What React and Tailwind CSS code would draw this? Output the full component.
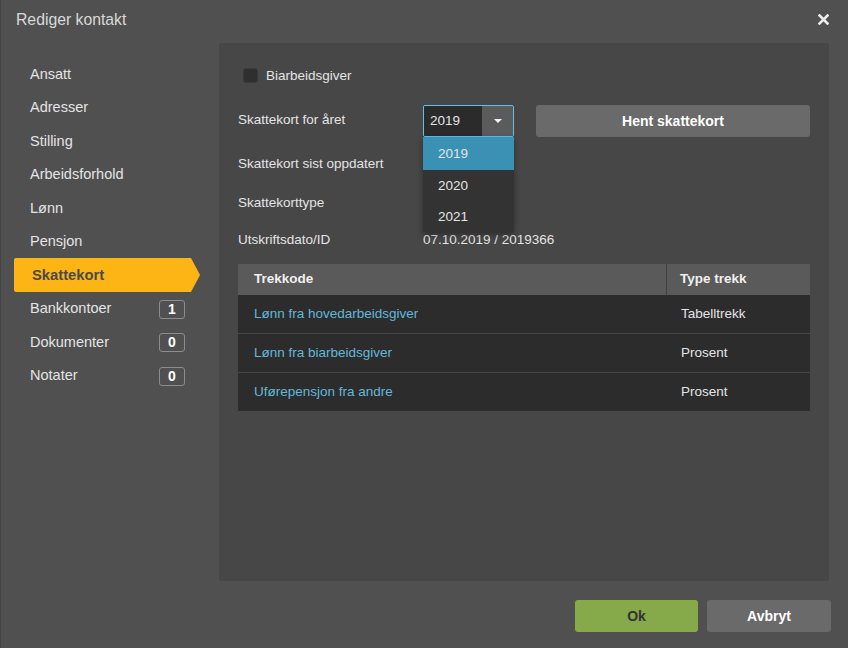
import React from 'react';

const menu = [
  { label: 'Ansatt' },
  { label: 'Adresser' },
  { label: 'Stilling' },
  { label: 'Arbeidsforhold' },
  { label: 'Lønn' },
  { label: 'Pensjon' },
  { label: 'Skattekort', active: true },
  { label: 'Bankkontoer', count: 1 },
  { label: 'Dokumenter', count: 0 },
  { label: 'Notater', count: 0 },
];

const rows = [
  { code: 'Lønn fra hovedarbeidsgiver', type: 'Tabelltrekk' },
  { code: 'Lønn fra biarbeidsgiver', type: 'Prosent' },
  { code: 'Uførepensjon fra andre', type: 'Prosent' },
];

const years = ['2019', '2020', '2021'];

export default function App() {
  return (
    <div className="w-[848px] h-[648px] bg-[#505050] flex flex-col text-[#e4e4e4] border-l border-[#434343] font-['Liberation_Sans',Arial,sans-serif]">
      {/* tittel */}
      <div className="h-[43px] flex items-start justify-between pl-[15px] pr-[19px] pt-[8px]">
        <span className="text-[15.75px] text-[#d9d9d9]">Rediger kontakt</span>
        <svg width="11" height="11" viewBox="0 0 11 11" className="mt-[6px]">
          <path d="M1.5 1.5 L9.5 9.5 M9.5 1.5 L1.5 9.5" stroke="#ececec" strokeWidth="2.6" strokeLinecap="square" />
        </svg>
      </div>

      <div className="flex flex-1 min-h-0">
        {/* meny */}
        <div className="w-[218px] shrink-0 pt-[15px] flex flex-col">
          {menu.map((m) =>
            m.active ? (
              <div
                key={m.label}
                className="ml-[13px] w-[186px] h-[34px] -mt-[1px] mb-[0.5px] flex items-center pl-[18px] bg-[#fdb515] rounded-l-[2px] text-[#4a4a4a] font-bold text-[14.75px] [clip-path:polygon(0_0,177px_0,100%_50%,177px_100%,0_100%)]"
              >
                {m.label}
              </div>
            ) : (
              <div key={m.label} className="ml-[13px] w-[186px] h-[33.5px] flex items-center justify-between pl-[16px] pr-[15px] text-[14.5px]">
                <span>{m.label}</span>
                {m.count !== undefined && (
                  <span className="w-[26px] h-[19px] flex items-center justify-center border border-[#8c8c8c] rounded-[3px] font-bold text-[14px] text-white">
                    {m.count}
                  </span>
                )}
              </div>
            )
          )}
        </div>

        {/* innhold */}
        <div className="flex-1 mr-[19px] bg-[#474747] rounded-[3px] px-[19px] pt-[25px] text-[13.5px]">
          <label className="flex items-center h-[15px] pl-[5px] gap-[8px]">
            <span className="w-[15px] h-[15px] rounded-[3px] bg-[#2f2f2f] border border-[#3a3a3a]" />
            <span className="text-[13.5px] pt-px">Biarbeidsgiver</span>
          </label>

          <div className="flex items-center h-[32px] mt-[22px]">
            <span className="w-[185px] pb-px">Skattekort for året</span>
            <div className="relative">
              <div className="w-[91px] h-[32px] flex border border-[#5fc3e4] rounded-[2px] overflow-hidden">
                <span className="flex-1 bg-[#2b2b2b] flex items-center pl-[6px]">2019</span>
                <span className="w-[31px] bg-[#5b5b5b] flex items-center justify-center">
                  <svg width="8" height="4" viewBox="0 0 8 4">
                    <path d="M0 0 H8 L4 4 Z" fill="#f2f2f2" />
                  </svg>
                </span>
              </div>
              <div className="absolute left-0 top-[32px] w-[91px] bg-[#333333] shadow-[0_3px_6px_rgba(0,0,0,0.35)] z-10">
                {years.map((y, i) => (
                  <div
                    key={y}
                    className={`flex items-center pl-[15px] pt-[2px] ${i === 0 ? 'bg-[#3b91b4] h-[33px]' : 'h-[31px]'}`}
                  >
                    {y}
                  </div>
                ))}
              </div>
            </div>
            <button className="ml-[22px] w-[274px] h-[32px] bg-[#6a6a6a] rounded-[3px] font-bold text-white text-[14px]">
              Hent skattekort
            </button>
          </div>

          <div className="flex items-center h-[52px]">
            <span className="w-[185px] pt-[2px]">Skattekort sist oppdatert</span>
          </div>
          <div className="flex items-center h-[26px]">
            <span className="w-[185px] pt-[2px]">Skattekorttype</span>
          </div>
          <div className="flex items-center h-[49px] pt-[2px]">
            <span className="w-[185px]">Utskriftsdato/ID</span>
            <span>07.10.2019 / 2019366</span>
          </div>

          <div className="w-[572px]">
            <div className="flex h-[31px] bg-[#5a5a5a] font-bold text-[#f0f0f0]">
              <div className="w-[429px] flex items-center pl-[16px] border-r border-[#404040]">Trekkode</div>
              <div className="flex-1 flex items-center pl-[13px]">Type trekk</div>
            </div>
            {rows.map((r, i) => (
              <div key={r.code} className={`flex bg-[#2c2c2c] ${i > 0 ? 'h-[39px] border-t border-[#474747]' : 'h-[38px]'}`}>
                <div className="w-[429px] flex items-center pl-[16px] pt-px text-[#62b8da]">{r.code}</div>
                <div className="flex-1 flex items-center pl-[14px] pt-px">{r.type}</div>
              </div>
            ))}
          </div>
        </div>
      </div>

      {/* knapper */}
      <div className="h-[67px] shrink-0 flex justify-end items-start pt-[19px] pr-[17px] gap-[9px]">
        <button className="w-[123px] h-[32px] bg-[#86a94a] rounded-[3px] font-bold text-[14px] text-[#333333]">Ok</button>
        <button className="w-[124px] h-[32px] bg-[#6a6a6a] rounded-[3px] font-bold text-[14px] text-white">Avbryt</button>
      </div>
    </div>
  );
}
